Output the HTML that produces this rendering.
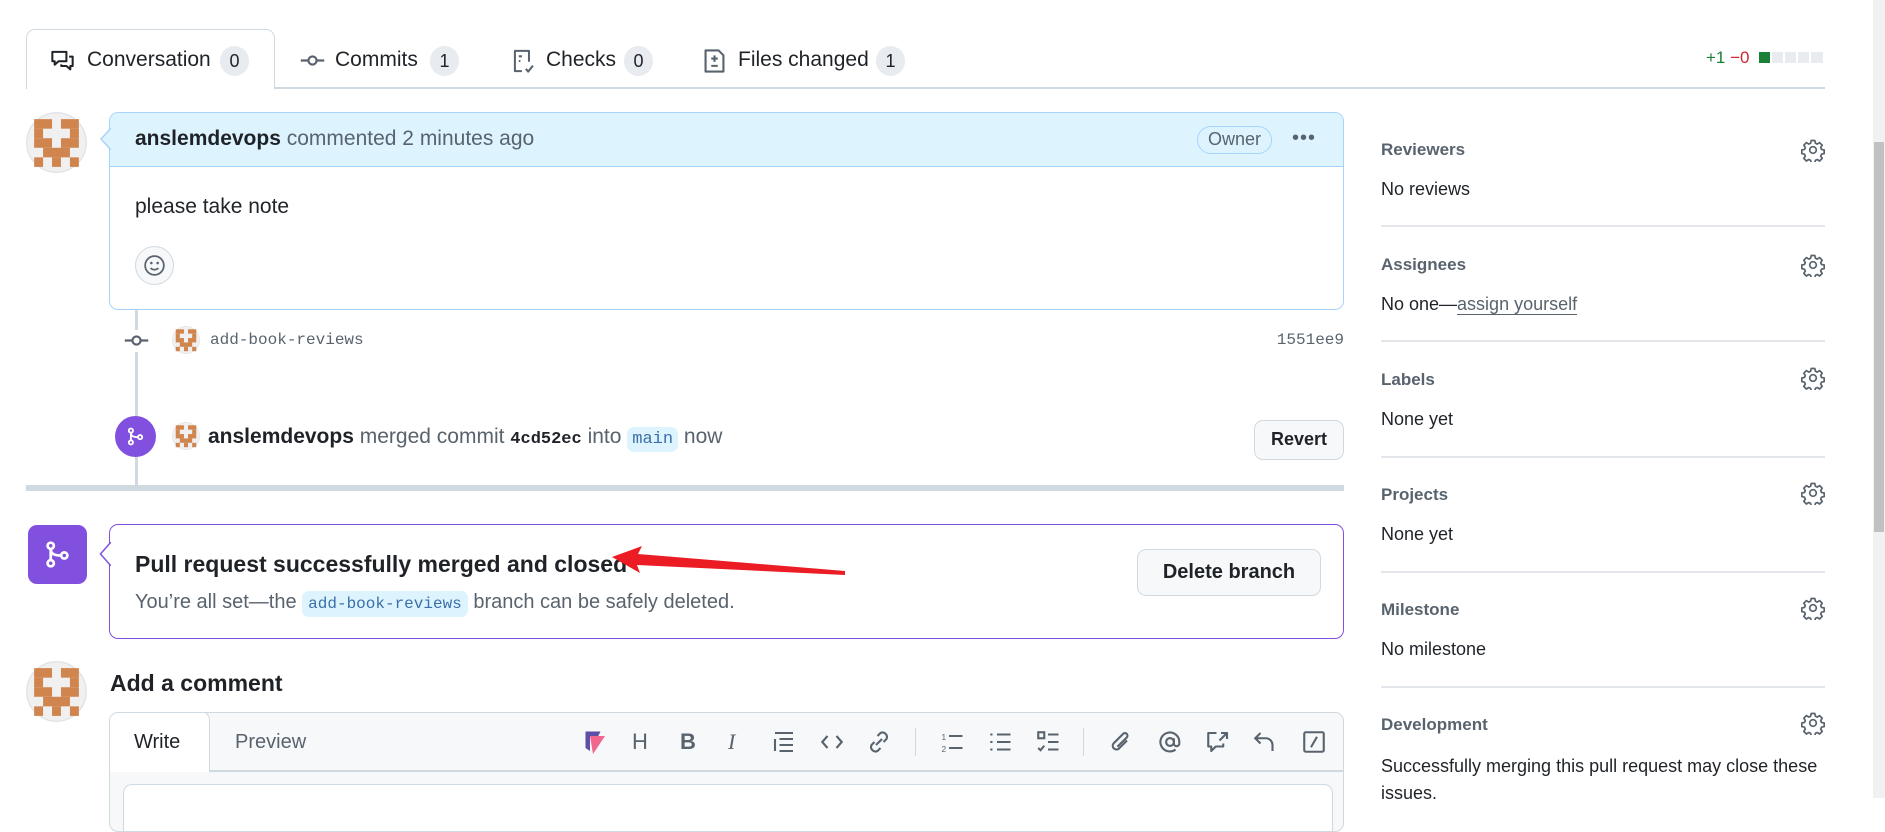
<!DOCTYPE html>
<html><head><meta charset="utf-8">
<style>
*{box-sizing:border-box;margin:0;padding:0}
body{width:1885px;height:798px;overflow:hidden;background:#fff;font-family:"Liberation Sans",Arial,sans-serif;color:#1f2328;position:relative}
.a{position:absolute}
.muted{color:#59636e}
.cnt{position:absolute;height:30px;min-width:29px;border-radius:15px;background:#e8ebef;font-size:18px;line-height:30px;text-align:center;color:#1f2328}
.tabt{position:absolute;top:47px;font-size:21px;color:#1f2328;line-height:26px}
.mono{font-family:"Liberation Mono",monospace}
.sh{position:absolute;left:1381px;font-size:17px;font-weight:bold;color:#59636e}
.sv{position:absolute;left:1381px;font-size:18px;color:#1f2328}
.sd{position:absolute;left:1381px;width:444px;height:2px;background:#e3e7eb}
.gear{position:absolute;left:1801px}
.btn{position:absolute;background:#f6f8fa;border:1.5px solid #d1d9e0;border-radius:9px;font-weight:bold;color:#1f2328;text-align:center}
.ti{position:absolute;top:730px}
</style></head><body>

<svg width="0" height="0" style="position:absolute"><defs>
<symbol id="av" viewBox="0 0 60 60"><circle cx="30" cy="30" r="29.3" fill="#f0f0f0" stroke="#dfe2e5" stroke-width="1.2"/>
<g fill="#d0854f" transform="translate(8,7) scale(8.8,9.4)">
<rect x="0" y="0" width="2" height="1"/><rect x="3" y="0" width="2" height="1"/>
<rect x="0" y="1" width="1" height="1"/><rect x="4" y="1" width="1" height="1"/>
<rect x="0" y="2" width="2" height="1"/><rect x="3" y="2" width="2" height="1"/>
<rect x="1" y="3" width="3" height="1"/>
<rect x="0" y="4" width="1" height="1"/><rect x="2" y="4" width="1" height="1"/><rect x="4" y="4" width="1" height="1"/>
</g></symbol>
<symbol id="gear" viewBox="0 0 24 24"><g fill="none" stroke="#59636e" stroke-width="1.7" stroke-linejoin="round">
<path d="M10.2 2.5h3.6l.6 2.7 1.9.9 2.3-1.5 2.6 2.6-1.5 2.3.8 1.9 2.7.6v3.6l-2.7.6-.8 1.9 1.5 2.3-2.6 2.6-2.3-1.5-1.9.8-.6 2.7h-3.6l-.6-2.7-1.9-.8-2.3 1.5-2.6-2.6 1.5-2.3-.8-1.9-2.7-.6v-3.6l2.7-.6.8-1.9-1.5-2.3 2.6-2.6 2.3 1.5 1.9-.9z"/>
<circle cx="12" cy="12" r="3.3"/></g></symbol>
<symbol id="merge" viewBox="0 0 16 16"><g fill="none" stroke="#fff" stroke-width="1.4"><circle cx="4.5" cy="3.5" r="1.6"/><circle cx="4.5" cy="12.5" r="1.6"/><circle cx="11.5" cy="8.5" r="1.6"/><path d="M4.5 5.1v5.8M4.5 5.1c0 2.5 1.6 3.4 5.4 3.4"/></g></symbol>
</defs></svg>

<!-- Tabs -->
<div class="a" style="left:26px;top:29px;width:249px;height:60px;border:1.5px solid #d1d9e0;border-bottom:none;border-radius:9px 9px 0 0;background:#fff;z-index:2"></div>
<div class="a" style="left:274px;top:87px;width:1551px;height:2px;background:#d1d9e0"></div>
<div class="a" style="left:26px;top:87px;width:1px;height:2px;background:#d1d9e0"></div>

<svg class="a" style="left:50px;top:48px;z-index:3" width="25" height="25" viewBox="0 0 16 16"><g fill="none" stroke="#1f2328" stroke-width="1.3" stroke-linejoin="round"><path d="M1.5 2.5h9v6h-5l-2.5 2.2v-2.2h-1.5z"/><path d="M12.2 5.5h2.3v6h-1.5v2.2l-2.5-2.2h-3.3v-1"/></g></svg>
<div class="tabt" style="left:87px;z-index:3">Conversation</div>
<div class="cnt" style="left:220px;top:46px;z-index:3">0</div>

<svg class="a" style="left:300px;top:48px" width="25" height="25" viewBox="0 0 16 16"><g fill="none" stroke="#59636e" stroke-width="1.4"><circle cx="8" cy="8" r="2.6"/><path d="M0.5 8h4.9M10.6 8h4.9"/></g></svg>
<div class="tabt" style="left:335px">Commits</div>
<div class="cnt" style="left:430px;top:46px">1</div>

<svg class="a" style="left:511px;top:48px" width="25" height="26" viewBox="0 0 16 16"><g fill="none" stroke="#59636e" stroke-width="1.3" stroke-linejoin="round"><path d="M7 14.5H2.5v-13h9v7"/><path d="M5 5h2M5 8h1M9.5 13l1.5 1.8 3-3.8"/></g></svg>
<div class="tabt" style="left:546px">Checks</div>
<div class="cnt" style="left:624px;top:46px">0</div>

<svg class="a" style="left:703px;top:48px" width="23" height="26" viewBox="0 0 14 16"><g fill="none" stroke="#59636e" stroke-width="1.3" stroke-linejoin="round"><path d="M1.5 1.5h8l3 3v10h-11z"/><path d="M7 4.5v4M5 6.5h4M5 11h4"/></g></svg>
<div class="tabt" style="left:738px">Files changed</div>
<div class="cnt" style="left:876px;top:46px">1</div>

<div class="a" style="left:1706px;top:47px;font-size:17px;line-height:22px"><span style="color:#1a7f37">+1</span> <span style="color:#d1242f">−0</span></div>
<div class="a" style="left:1759px;top:52px;width:11px;height:11px;background:#1a7f37"></div>
<div class="a" style="left:1772px;top:52px;width:11px;height:11px;background:#e8ebef"></div>
<div class="a" style="left:1785px;top:52px;width:11px;height:11px;background:#e8ebef"></div>
<div class="a" style="left:1798px;top:52px;width:11px;height:11px;background:#e8ebef"></div>
<div class="a" style="left:1811px;top:52px;width:12px;height:11px;background:#e8ebef"></div>

<!-- timeline line -->
<div class="a" style="left:135px;top:310px;width:3px;height:178px;background:#d1d9e0"></div>

<!-- comment -->
<svg class="a" style="left:26px;top:112px" width="61" height="61"><use href="#av"/></svg>
<div class="a" style="left:109px;top:112px;width:1235px;height:198px;border:1.5px solid #a8d4fb;border-radius:9px;overflow:hidden">
  <div style="height:54px;background:#ddf4ff;border-bottom:1.5px solid #a8d4fb;position:relative">
    <div class="a" style="left:25px;top:14px;font-size:21px"><b>anslemdevops</b> <span class="muted">commented 2 minutes ago</span></div>
    <div class="a" style="left:1087px;top:13px;height:28px;padding:0 10px;border:1.5px solid #a8d4fb;border-radius:14px;font-size:18px;line-height:25px;color:#59636e">Owner</div>
    <div class="a" style="left:1182px;top:14px;font-size:20px;color:#59636e;letter-spacing:1px">•••</div>
  </div>
  <div class="a" style="left:25px;top:82px;font-size:21px">please take note</div>
  <div class="a" style="left:25px;top:133px;width:39px;height:39px;border-radius:50%;background:#f6f8fa;border:1.5px solid #d1d9e0"></div>
  <svg class="a" style="left:33px;top:141px" width="23" height="23" viewBox="0 0 16 16"><g fill="none" stroke="#59636e" stroke-width="1.2"><circle cx="8" cy="8" r="6.5"/><path d="M5.3 9.8c1.4 1.5 4 1.5 5.4 0"/></g><circle cx="5.8" cy="6.3" r=".9" fill="#59636e"/><circle cx="10.2" cy="6.3" r=".9" fill="#59636e"/></svg>
</div>
<svg class="a" style="left:100px;top:128px" width="11" height="22"><path d="M11 0L1 11l10 11" fill="#ddf4ff" stroke="#a8d4fb" stroke-width="1.5"/></svg>

<!-- commit item -->
<div class="a" style="left:124px;top:330px;width:26px;height:22px;background:#fff"></div>
<svg class="a" style="left:124px;top:328px" width="25" height="25" viewBox="0 0 16 16"><g fill="none" stroke="#59636e" stroke-width="1.4"><circle cx="8" cy="8" r="2.6"/><path d="M0.5 8h4.9M10.6 8h4.9"/></g></svg>
<svg class="a" style="left:172px;top:326px" width="28" height="28"><use href="#av"/></svg>
<div class="a mono muted" style="left:210px;top:331px;font-size:16px">add-book-reviews</div>
<div class="a mono muted" style="left:1267px;top:331px;font-size:16px;width:77px;text-align:right">1551ee9</div>

<!-- merged event -->
<div class="a" style="left:115px;top:416px;width:41px;height:41px;border-radius:50%;background:#8250df"></div>
<svg class="a" style="left:125px;top:426px" width="21" height="21"><use href="#merge"/></svg>
<svg class="a" style="left:172px;top:422px" width="28" height="28"><use href="#av"/></svg>
<div class="a" style="left:208px;top:424px;font-size:21px;line-height:26px;white-space:nowrap"><b>anslemdevops</b> <span class="muted">merged commit</span> <b class="mono" style="font-size:17px">4cd52ec</b> <span class="muted">into</span> <span class="mono" style="font-size:17px;background:#ddf4ff;border-radius:7px;padding:3px 5px;color:#3a6fa8">main</span> <span class="muted">now</span></div>
<div class="btn" style="left:1254px;top:420px;width:90px;height:40px;font-size:18px;line-height:37px">Revert</div>

<!-- separator -->
<div class="a" style="left:26px;top:485px;width:1318px;height:6px;background:#d1d9e0"></div>

<!-- merged box -->
<div class="a" style="left:28px;top:525px;width:59px;height:59px;border-radius:9px;background:#8250df"></div>
<svg class="a" style="left:42px;top:539px" width="31" height="31"><use href="#merge"/></svg>
<div class="a" style="left:109px;top:524px;width:1235px;height:115px;border:1.5px solid #8250df;border-radius:9px"></div>
<svg class="a" style="left:99px;top:542px" width="12" height="24"><path d="M12 0L1.5 12L12 24" fill="#fff" stroke="#8250df" stroke-width="1.5"/></svg>
<div class="a" style="left:135px;top:551px;font-size:23px;font-weight:bold">Pull request successfully merged and closed</div>
<div class="a" style="left:135px;top:589px;font-size:20px;line-height:26px;white-space:nowrap"><span class="muted">You’re all set—the</span> <span class="mono" style="font-size:16px;background:#ddf4ff;border-radius:7px;padding:4px 6px;color:#3a6fa8">add-book-reviews</span> <span class="muted">branch can be safely deleted.</span></div>
<div class="btn" style="left:1137px;top:549px;width:184px;height:47px;font-size:20px;line-height:44px;font-weight:600">Delete branch</div>

<!-- red arrow -->
<svg class="a" style="left:600px;top:540px" width="260" height="45"><polygon points="12,17 42,6 38,14 245,31 245,35 37,25 40,33" fill="#ec1c24"/></svg>

<!-- add a comment -->
<svg class="a" style="left:26px;top:661px" width="61" height="61"><use href="#av"/></svg>
<div class="a" style="left:110px;top:670px;font-size:23px;font-weight:bold">Add a comment</div>
<div class="a" style="left:109px;top:712px;width:1235px;height:120px;border:1.5px solid #d1d9e0;border-radius:9px;background:#f6f8fa;overflow:hidden">
  <div class="a" style="left:0;top:57px;width:1235px;height:2px;background:#d1d9e0"></div>
  <div class="a" style="left:-2px;top:-2px;width:102px;height:61px;background:#fff;border:1.5px solid #d1d9e0;border-bottom:none;border-radius:9px 9px 0 0"></div>
  <div class="a" style="left:24px;top:18px;font-size:20px">Write</div>
  <div class="a muted" style="left:125px;top:18px;font-size:20px">Preview</div>
  <div class="a" style="left:13px;top:71px;width:1210px;height:60px;background:#fff;border:1.5px solid #d1d9e0;border-radius:9px"></div>
</div>

<!-- toolbar icons -->
<svg class="ti" style="left:584px" width="24" height="24" viewBox="0 0 16 16"><path d="M1 1h10l-1.5 3H4v10L1 12z" fill="#5b4fa6"/><path d="M4 4h10l-8 12z" fill="#f0668c"/></svg>
<div class="ti" style="left:632px;top:729px;font-size:22px;color:#59636e">H</div>
<div class="ti" style="left:680px;top:729px;font-size:22px;color:#59636e;font-weight:bold">B</div>
<div class="ti" style="left:728px;top:729px;font-size:22px;color:#59636e;font-style:italic;font-family:'Liberation Serif',serif">I</div>
<svg class="ti" style="left:772px" width="24" height="24" viewBox="0 0 16 16"><g stroke="#59636e" stroke-width="1.4" fill="none"><path d="M2 2h12M2 6v8M5 6h9M5 10h9M5 14h9"/></g></svg>
<svg class="ti" style="left:820px" width="24" height="24" viewBox="0 0 16 16"><g stroke="#59636e" stroke-width="1.4" fill="none"><path d="M5 4L1.5 8 5 12M11 4l3.5 4L11 12"/></g></svg>
<svg class="ti" style="left:867px" width="24" height="24" viewBox="0 0 16 16"><g stroke="#59636e" stroke-width="1.4" fill="none"><path d="M7 4l2-2a3 3 0 014 4l-2 2M9 12l-2 2a3 3 0 01-4-4l2-2M6 10l4-4"/></g></svg>
<div class="a" style="left:915px;top:728px;width:1px;height:28px;background:#d1d9e0"></div>
<svg class="ti" style="left:940px" width="24" height="24" viewBox="0 0 16 16"><g stroke="#59636e" stroke-width="1.4" fill="none"><path d="M6 4h9M6 12h9"/></g><text x="1" y="6.5" font-size="5.5" fill="#59636e" font-family="Liberation Sans">1</text><text x="1" y="14.5" font-size="5.5" fill="#59636e" font-family="Liberation Sans">2</text></svg>
<svg class="ti" style="left:988px" width="24" height="24" viewBox="0 0 16 16"><g stroke="#59636e" stroke-width="1.4" fill="none"><path d="M6 3h9M6 8h9M6 13h9M1.5 3h1.5M1.5 8h1.5M1.5 13h1.5"/></g></svg>
<svg class="ti" style="left:1036px" width="24" height="24" viewBox="0 0 16 16"><g stroke="#59636e" stroke-width="1.4" fill="none"><rect x="1.5" y="1.5" width="4" height="4"/><path d="M8 3h7M8 8h7M8 13h7M1.5 12l1.5 1.5 2.5-3"/></g></svg>
<div class="a" style="left:1083px;top:728px;width:1px;height:28px;background:#d1d9e0"></div>
<svg class="ti" style="left:1109px" width="24" height="24" viewBox="0 0 16 16"><g stroke="#59636e" stroke-width="1.4" fill="none"><path d="M12 7l-5.5 5.5a2.5 2.5 0 01-3.5-3.5L9.5 2.5a1.7 1.7 0 012.4 2.4L5.6 11.2"/></g></svg>
<svg class="ti" style="left:1158px" width="24" height="24" viewBox="0 0 16 16"><g stroke="#59636e" stroke-width="1.4" fill="none"><circle cx="8" cy="8" r="2.6"/><path d="M10.6 5.5v3.5a1.8 1.8 0 003.6 0V8a6.3 6.3 0 10-2.5 5"/></g></svg>
<svg class="ti" style="left:1206px" width="24" height="24" viewBox="0 0 16 16"><g stroke="#59636e" stroke-width="1.4" fill="none" stroke-linejoin="round"><path d="M7 2H1.5v9h2v3l3-3h5V9M10 2h4v4M14 2L9 7"/></g></svg>
<svg class="ti" style="left:1253px" width="24" height="24" viewBox="0 0 16 16"><g stroke="#59636e" stroke-width="1.4" fill="none"><path d="M5 2L1.5 5.5 5 9M1.5 5.5h7a4.5 4.5 0 014.5 4.5v4"/></g></svg>
<svg class="ti" style="left:1302px" width="24" height="24" viewBox="0 0 16 16"><g stroke="#59636e" stroke-width="1.4" fill="none"><rect x="1.5" y="1.5" width="13" height="13" rx="1"/><path d="M10 4.5l-4 7"/></g></svg>

<!-- sidebar -->
<div class="sh" style="top:140px">Reviewers</div>
<svg class="gear" style="top:138px" width="24" height="24"><use href="#gear"/></svg>
<div class="sv" style="top:179px">No reviews</div>
<div class="sd" style="top:225px"></div>

<div class="sh" style="top:255px">Assignees</div>
<svg class="gear" style="top:253px" width="24" height="24"><use href="#gear"/></svg>
<div class="sv" style="top:294px">No one—<span class="muted" style="border-bottom:1.5px solid #59636e">assign yourself</span></div>
<div class="sd" style="top:340px"></div>

<div class="sh" style="top:370px">Labels</div>
<svg class="gear" style="top:366px" width="24" height="24"><use href="#gear"/></svg>
<div class="sv" style="top:409px">None yet</div>
<div class="sd" style="top:456px"></div>

<div class="sh" style="top:485px">Projects</div>
<svg class="gear" style="top:481px" width="24" height="24"><use href="#gear"/></svg>
<div class="sv" style="top:524px">None yet</div>
<div class="sd" style="top:571px"></div>

<div class="sh" style="top:600px">Milestone</div>
<svg class="gear" style="top:596px" width="24" height="24"><use href="#gear"/></svg>
<div class="sv" style="top:639px">No milestone</div>
<div class="sd" style="top:686px"></div>

<div class="sh" style="top:715px">Development</div>
<svg class="gear" style="top:711px" width="24" height="24"><use href="#gear"/></svg>
<div class="sv" style="top:753px;line-height:27px;width:440px">Successfully merging this pull request may close these issues.</div>

<!-- scrollbar -->
<div class="a" style="left:1873px;top:0;width:12px;height:798px;background:#f1f1f1"></div>
<div class="a" style="left:1874px;top:142px;width:10px;height:390px;background:#c1c1c1"></div>
</body></html>
